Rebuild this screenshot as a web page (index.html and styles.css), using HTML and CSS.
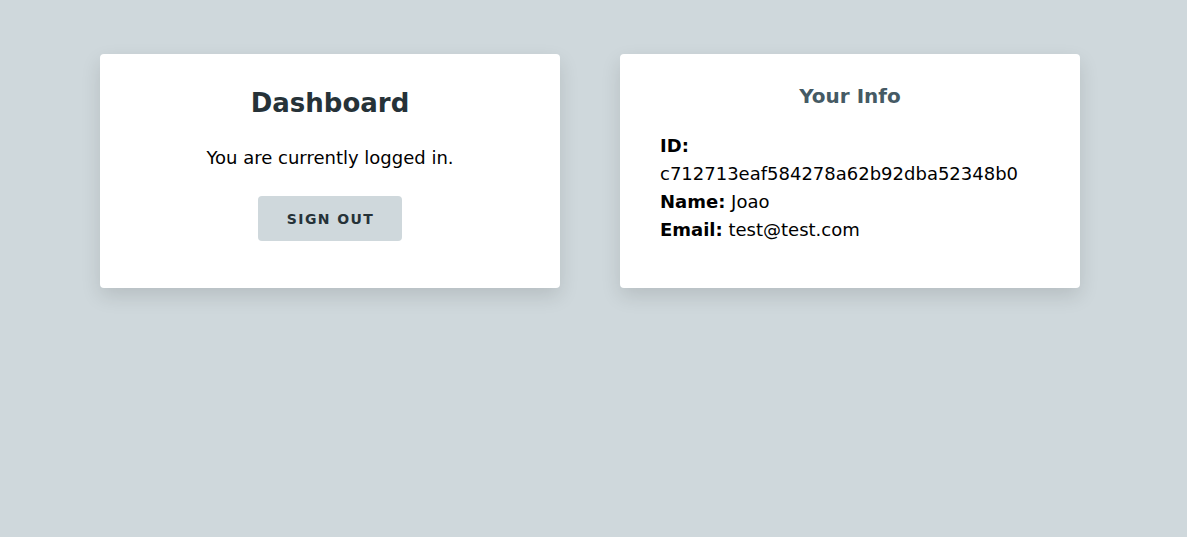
FILE: index.html
```html
<!DOCTYPE html>
<html>
<head>
<meta charset="utf-8">
<link rel="stylesheet" href="styles.css">
</head>
<body>
<div class="page">
  <div class="card dash">
    <h1 class="title">Dashboard</h1>
    <p class="msg">You are currently logged in.</p>
    <button class="btn">SIGN OUT</button>
  </div>
  <div class="card info">
    <h2 class="subtitle">Your Info</h2>
    <div class="details">
      <div><b>ID:</b> c712713eaf584278a62b92dba52348b0</div>
      <div><b>Name:</b> Joao</div>
      <div><b>Email:</b> test@test.com</div>
    </div>
  </div>
</div>
</body>
</html>
```
FILE: styles.css
```css
html, body {
  margin: 0;
  padding: 0;
  background: #cfd8dc;
  font-family: "DejaVu Sans", sans-serif;
}
.page {
  display: flex;
  gap: 60px;
  padding: 54px 100px;
  align-items: flex-start;
}
.card {
  width: 460px;
  height: 234px;
  box-sizing: border-box;
  background: #fff;
  border-radius: 4px;
  box-shadow: 0 8px 20px rgba(0, 0, 0, 0.12);
}
.dash {
  display: flex;
  flex-direction: column;
  align-items: center;
  padding-top: 33px;
}
.title {
  margin: 0;
  font-size: 26px;
  line-height: 32px;
  font-weight: bold;
  color: #263238;
}
.msg {
  margin: 27px 0 0;
  font-size: 18px;
  line-height: 24px;
  color: #000;
}
.btn {
  margin-top: 26px;
  width: 144px;
  height: 45px;
  border: none;
  border-radius: 4px;
  background: #cfd8dc;
  color: #263238;
  font-family: "DejaVu Sans", sans-serif;
  font-weight: bold;
  font-size: 14px;
  letter-spacing: 0.1em;
  padding: 0;
  padding-left: 1px;
}
.info {
  padding: 28px 40px 0;
}
.subtitle {
  margin: 0;
  text-align: center;
  font-size: 20px;
  line-height: 28px;
  font-weight: bold;
  color: #455a64;
}
.details {
  margin-top: 22px;
  font-size: 18px;
  line-height: 28px;
  color: #000;
}
```
